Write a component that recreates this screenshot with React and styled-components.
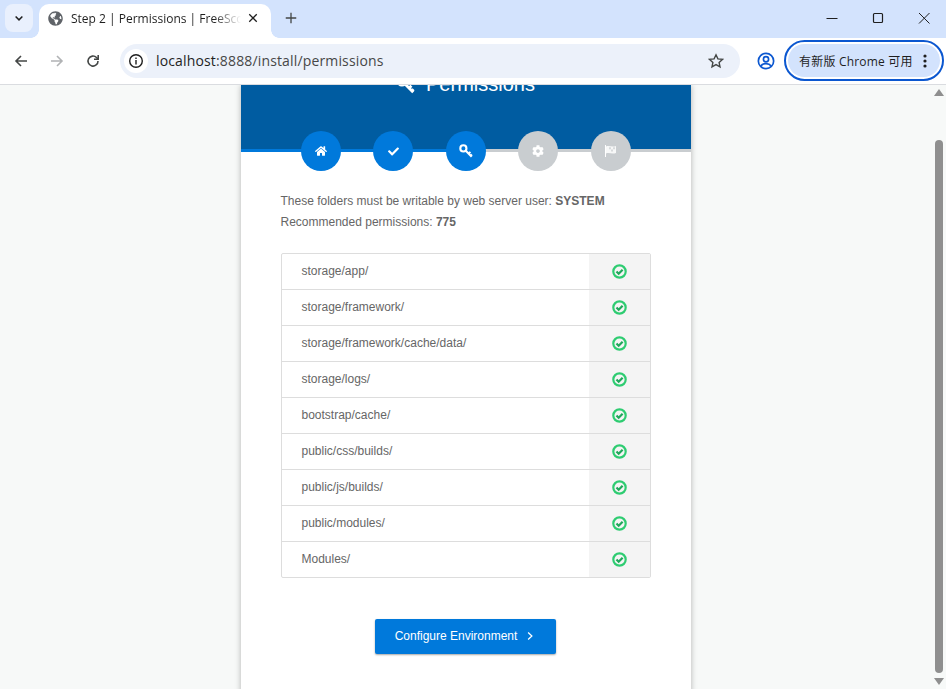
import React from "react";
import styled, { createGlobalStyle } from "styled-components";
import { FaHome, FaCheck, FaCog, FaGlobeAmericas } from "react-icons/fa";

const GlobalStyle = createGlobalStyle`
  html, body {
    margin: 0;
    padding: 0;
    overflow: hidden;
  }
  * {
    box-sizing: border-box;
  }
`;

const Window = styled.div`
  width: 946px;
  height: 689px;
  display: flex;
  flex-direction: column;
  overflow: hidden;
  font-family: "Liberation Sans", Arial, sans-serif;
`;

const TabStrip = styled.div`
  height: 38px;
  flex: none;
  display: flex;
  align-items: flex-start;
  background: #d3e3fd;
  padding: 4px 0 0 5px;
  font-family: "Open Sans", "Noto Sans", sans-serif;
`;

const TabSearch = styled.div`
  width: 28px;
  height: 28px;
  border-radius: 8px;
  background: #e9f0fd;
  color: #1f1f1f;
  display: flex;
  align-items: center;
  justify-content: center;
`;

const Tab = styled.div`
  position: relative;
  width: 232px;
  height: 34px;
  margin-left: 6px;
  padding: 0 9px 6px;
  background: #fff;
  border-radius: 10px 10px 0 0;
  display: flex;
  align-items: center;
  color: #3c4043;
  font-size: 12px;
  &::before,
  &::after {
    content: "";
    position: absolute;
    bottom: 0;
    width: 8px;
    height: 8px;
    background: radial-gradient(circle at var(--cx) 0, #d3e3fd 7.5px, #fff 8px);
  }
  &::before {
    --cx: 0;
    left: -8px;
  }
  &::after {
    --cx: 100%;
    right: -8px;
  }
`;

const TabTitle = styled.span`
  width: 170px;
  margin-left: 8px;
  white-space: nowrap;
  overflow: hidden;
  color: #1f1f1f;
  -webkit-mask-image: linear-gradient(to right, #000 84%, transparent);
  mask-image: linear-gradient(to right, #000 84%, transparent);
`;

const TabClose = styled.span`
  margin-left: auto;
  margin-right: 3px;
  display: flex;
  color: #1f1f1f;
`;

const NewTab = styled.div`
  margin: 1px 0 0 13px;
  height: 26px;
  display: flex;
  align-items: center;
  color: #444746;
`;

const WindowControls = styled.div`
  margin-left: auto;
  display: flex;
  height: 28px;
  align-items: center;
  gap: 30px;
  padding-right: 14px;
  color: #1f1f1f;
`;

const Toolbar = styled.div`
  height: 47px;
  flex: none;
  display: flex;
  align-items: center;
  background: #fff;
  border-bottom: 1px solid #dadce0;
  padding: 0 0 1px 13px;
  font-family: "Open Sans", "Noto Sans", sans-serif;
`;

const NavButton = styled.div`
  width: 16px;
  height: 16px;
  margin-right: ${(p) => p.$gap}px;
  display: flex;
  color: ${(p) => (p.$off ? "#b1b3b5" : "#444746")};
`;

const Omnibox = styled.div`
  width: 620px;
  height: 34px;
  flex: none;
  margin-left: 19px;
  border-radius: 17px;
  background: #ecf1fa;
  display: flex;
  align-items: center;
  padding: 0 16px 0 4px;
`;

const InfoChip = styled.div`
  width: 24px;
  height: 24px;
  border-radius: 50%;
  background: #fff;
  display: flex;
  align-items: center;
  justify-content: center;
  color: #1f1f1f;
`;

const Url = styled.span`
  margin-left: 8px;
  font-size: 14px;
  letter-spacing: 0.15px;
  color: #474747;
  white-space: nowrap;
  b {
    font-weight: 400;
    color: #1f1f1f;
  }
`;

const StarWrap = styled.div`
  margin-left: auto;
  display: flex;
  color: #444746;
`;

const Profile = styled.div`
  margin-left: 17px;
  display: flex;
  color: #0b57d0;
`;

const UpdateChip = styled.div`
  margin-left: 9px;
  width: 160px;
  height: 41px;
  flex: none;
  border-radius: 21px;
  border: 2px solid #0b57d0;
  padding: 2px;
  background: #fff;
`;

const UpdateInner = styled.div`
  height: 100%;
  border-radius: 17px;
  background: #d3e3fd;
  display: flex;
  align-items: center;
  padding: 0 13px 0 11px;
  font-size: 12px;
  letter-spacing: 0.2px;
  color: #1f1f1f;
  font-family: "Open Sans", "Noto Sans CJK SC", sans-serif;
  white-space: nowrap;
`;

const Dots = styled.span`
  margin-left: auto;
  display: flex;
  color: #1f1f1f;
`;

const Viewport = styled.div`
  flex: 1;
  min-height: 0;
  display: flex;
  background: #f7f9f8;
`;

const PageArea = styled.div`
  flex: 1;
  min-width: 0;
  overflow: hidden;
  display: flex;
  justify-content: center;
`;

const Card = styled.div`
  width: 450px;
  height: 640px;
  flex: none;
  background: #fff;
  box-shadow: 0 0 6px rgba(0, 0, 0, 0.28);
`;

const Banner = styled.div`
  height: 64px;
  background: #005ca1;
  color: #fff;
  font-size: 20px;
  overflow: hidden;
  display: flex;
  justify-content: center;
`;

const BannerTitle = styled.div`
  height: 24px;
  margin-top: -13px;
  display: flex;
  align-items: center;
  gap: 11px;
  line-height: 24px;
`;

const Progress = styled.div`
  height: 3px;
  background: linear-gradient(to right, #0079db 50%, #c9cdd0 50%);
`;

const Steps = styled.div`
  height: 40px;
  margin: -21px 60px 0;
  display: flex;
  justify-content: space-between;
  position: relative;
`;

const Step = styled.div`
  width: 40px;
  height: 40px;
  border-radius: 50%;
  background: ${(p) => (p.$done ? "#0079db" : "#c9cdd0")};
  color: #fff;
  display: flex;
  align-items: center;
  justify-content: center;
`;

const Body = styled.div`
  padding: 20px 40px 0;
  font-size: 12px;
  line-height: 21px;
  color: #666;
`;

const Intro = styled.p`
  margin: 0;
  b {
    font-weight: 700;
  }
`;

const FolderTable = styled.div`
  margin-top: 20px;
  border: 1px solid #ddd;
  border-radius: 2px;
`;

const FolderRow = styled.div`
  height: 36px;
  display: flex;
  border-top: 1px solid #ddd;
  &:first-child {
    height: 35px;
    border-top: 0;
  }
`;

const FolderName = styled.div`
  flex: 1;
  display: flex;
  align-items: center;
  padding-left: 20px;
`;

const FolderStatus = styled.div`
  width: 61px;
  display: flex;
  align-items: center;
  justify-content: center;
  padding-bottom: 1px;
  background: #f4f4f4;
  color: #2ecc71;
`;

const Actions = styled.div`
  margin-top: 41px;
  display: flex;
  justify-content: center;
`;

const PrimaryButton = styled.button`
  width: 181px;
  height: 35px;
  border: 0;
  border-radius: 2px;
  background: #0079db;
  color: #fff;
  font-family: inherit;
  font-size: 12px;
  display: flex;
  align-items: center;
  justify-content: center;
  gap: 8px;
  padding: 0 1px 1px 0;
  box-shadow: 0 1px 2px rgba(0, 0, 0, 0.35);
`;

const Scrollbar = styled.div`
  width: 15px;
  flex: none;
  display: flex;
  flex-direction: column;
  align-items: center;
  padding: 4px 0 1px;
  background: #f7f9f8;
`;

const ScrollArrow = styled.div`
  width: 0;
  height: 0;
  border-left: 5px solid transparent;
  border-right: 5px solid transparent;
  ${(p) => (p.$down ? "border-top: 7px solid #8f8f8f;" : "border-bottom: 7px solid #8f8f8f;")}
`;

const ScrollThumb = styled.div`
  width: 8px;
  height: 533px;
  margin: 44px 0 5px;
  border-radius: 4px;
  background: #8f8f8f;
`;

const Glyph = ({ size = 16, children, stroke = "currentColor", width = 1.5 }) => (
  <svg width={size} height={size} viewBox="0 0 16 16" fill="none" stroke={stroke} strokeWidth={width}>
    {children}
  </svg>
);

// ring at the upper left, shaft running down right, two teeth
const KeyGlyph = ({ size }) => (
  <svg width={size} height={size} viewBox="0 0 16 16" fill="none" stroke="currentColor" strokeWidth="2.4">
    <circle cx="5" cy="5" r="3.5" />
    <path d="M7.5 7.5l7 7M11 11l2-2M13.4 13.4l1.4-1.4" />
  </svg>
);

const CheckCircle = () => (
  <svg width="15" height="15" viewBox="0 0 15 15" fill="none" stroke="currentColor" strokeWidth="2.2">
    <circle cx="7.5" cy="7.5" r="6.2" />
    <path d="M4.5 7.5l2.2 2.2 3.9-3.9" stroke="#1fa85a" />
  </svg>
);

const FlagGlyph = () => (
  <svg width="14" height="14" viewBox="0 0 14 14" fill="#fff">
    <path d="M1 1h1v12H1z" />
    <path opacity="0.85" d="M2 2.5c3-1.4 6 1 10-.5v7c-4 1.5-7-.9-10 .5z" />
    <path fill="#c9cdd0" opacity="0.7" d="M5 3.2h2v2H5zM9 3.2h2v2H9zM7 5.4h2v2H7z" />
  </svg>
);

const steps = [
  { id: "home", icon: <FaHome size={12} />, done: true },
  { id: "check", icon: <FaCheck size={11} />, done: true },
  { id: "key", icon: <KeyGlyph size={14} />, done: true },
  { id: "cog", icon: <FaCog size={12} />, done: false },
  { id: "flag", icon: <FlagGlyph />, done: false },
];

const folders = [
  "storage/app/",
  "storage/framework/",
  "storage/framework/cache/data/",
  "storage/logs/",
  "bootstrap/cache/",
  "public/css/builds/",
  "public/js/builds/",
  "public/modules/",
  "Modules/",
];

export default function App() {
  return (
    <Window>
      <GlobalStyle />
      <TabStrip>
        <TabSearch>
          <Glyph size={12} width={2}>
            <path d="M3.5 6l4.5 4.5L12.5 6" />
          </Glyph>
        </TabSearch>
        <Tab>
          <FaGlobeAmericas size={15} color="#5f6368" />
          <TabTitle>Step 2 | Permissions | FreeScout</TabTitle>
          <TabClose>
            <Glyph size={12} width={1.7}>
              <path d="M3 3l10 10M13 3L3 13" />
            </Glyph>
          </TabClose>
        </Tab>
        <NewTab>
          <Glyph size={14} width={1.5}>
            <path d="M8 2v12M2 8h12" />
          </Glyph>
        </NewTab>
        <WindowControls>
          <Glyph size={16} width={1}>
            <path d="M2.5 8.5h11" />
          </Glyph>
          <Glyph size={16} width={1.2}>
            <rect x="3.5" y="3.5" width="9" height="9" rx="1" />
          </Glyph>
          <Glyph size={16} width={1}>
            <path d="M3 3l10.5 10.5M13.5 3L3 13.5" />
          </Glyph>
        </WindowControls>
      </TabStrip>
      <Toolbar>
        <NavButton $gap={20}>
          <Glyph width={1.6}>
            <path d="M14 8H3M8 3L3 8l5 5" />
          </Glyph>
        </NavButton>
        <NavButton $gap={20} $off>
          <Glyph width={1.6}>
            <path d="M2 8h11M8 3l5 5-5 5" />
          </Glyph>
        </NavButton>
        <NavButton $gap={0}>
          <Glyph width={1.6}>
            <path d="M13 8a5 5 0 1 1-1.5-3.5L13 6" />
            <path d="M13.2 2v4.2H9" />
          </Glyph>
        </NavButton>
        <Omnibox>
          <InfoChip>
            <Glyph size={16} width={1.4}>
              <circle cx="8" cy="8" r="6.3" />
              <path d="M8 7v4.5M8 4.4v1.5" />
            </Glyph>
          </InfoChip>
          <Url>
            <b>localhost</b>:8888/install/permissions
          </Url>
          <StarWrap>
            <Glyph size={16} width={1.4}>
              <path d="M8 1.8l1.9 4.1 4.5.5-3.3 3 .9 4.4L8 11.6l-4 2.2.9-4.4-3.3-3 4.5-.5z" />
            </Glyph>
          </StarWrap>
        </Omnibox>
        <Profile>
          <Glyph size={18} width={1.5}>
            <circle cx="8" cy="8" r="6.8" />
            <circle cx="8" cy="6.4" r="2.3" />
            <path d="M3.4 12.4c1.2-1.6 2.8-2 4.6-2s3.4.4 4.6 2" />
          </Glyph>
        </Profile>
        <UpdateChip>
          <UpdateInner>
            有新版 Chrome 可用
            <Dots>
              <svg width="4" height="14" viewBox="0 0 4 14" fill="currentColor">
                <circle cx="2" cy="2" r="1.6" />
                <circle cx="2" cy="7" r="1.6" />
                <circle cx="2" cy="12" r="1.6" />
              </svg>
            </Dots>
          </UpdateInner>
        </UpdateChip>
      </Toolbar>
      <Viewport>
        <PageArea>
          <Card>
            <Banner>
              <BannerTitle>
                <KeyGlyph size={19} />
                Permissions
              </BannerTitle>
            </Banner>
            <Progress />
            <Steps>
              {steps.map((s) => (
                <Step key={s.id} $done={s.done}>
                  {s.icon}
                </Step>
              ))}
            </Steps>
            <Body>
              <Intro>
                These folders must be writable by web server user: <b>SYSTEM</b>
                <br />
                Recommended permissions: <b>775</b>
              </Intro>
              <FolderTable>
                {folders.map((f) => (
                  <FolderRow key={f}>
                    <FolderName>{f}</FolderName>
                    <FolderStatus>
                      <CheckCircle />
                    </FolderStatus>
                  </FolderRow>
                ))}
              </FolderTable>
              <Actions>
                <PrimaryButton>
                  Configure Environment
                  <Glyph size={10} width={2}>
                    <path d="M5 2.5L11 8l-6 5.5" />
                  </Glyph>
                </PrimaryButton>
              </Actions>
            </Body>
          </Card>
        </PageArea>
        <Scrollbar>
          <ScrollArrow />
          <ScrollThumb />
          <ScrollArrow $down />
        </Scrollbar>
      </Viewport>
    </Window>
  );
}
